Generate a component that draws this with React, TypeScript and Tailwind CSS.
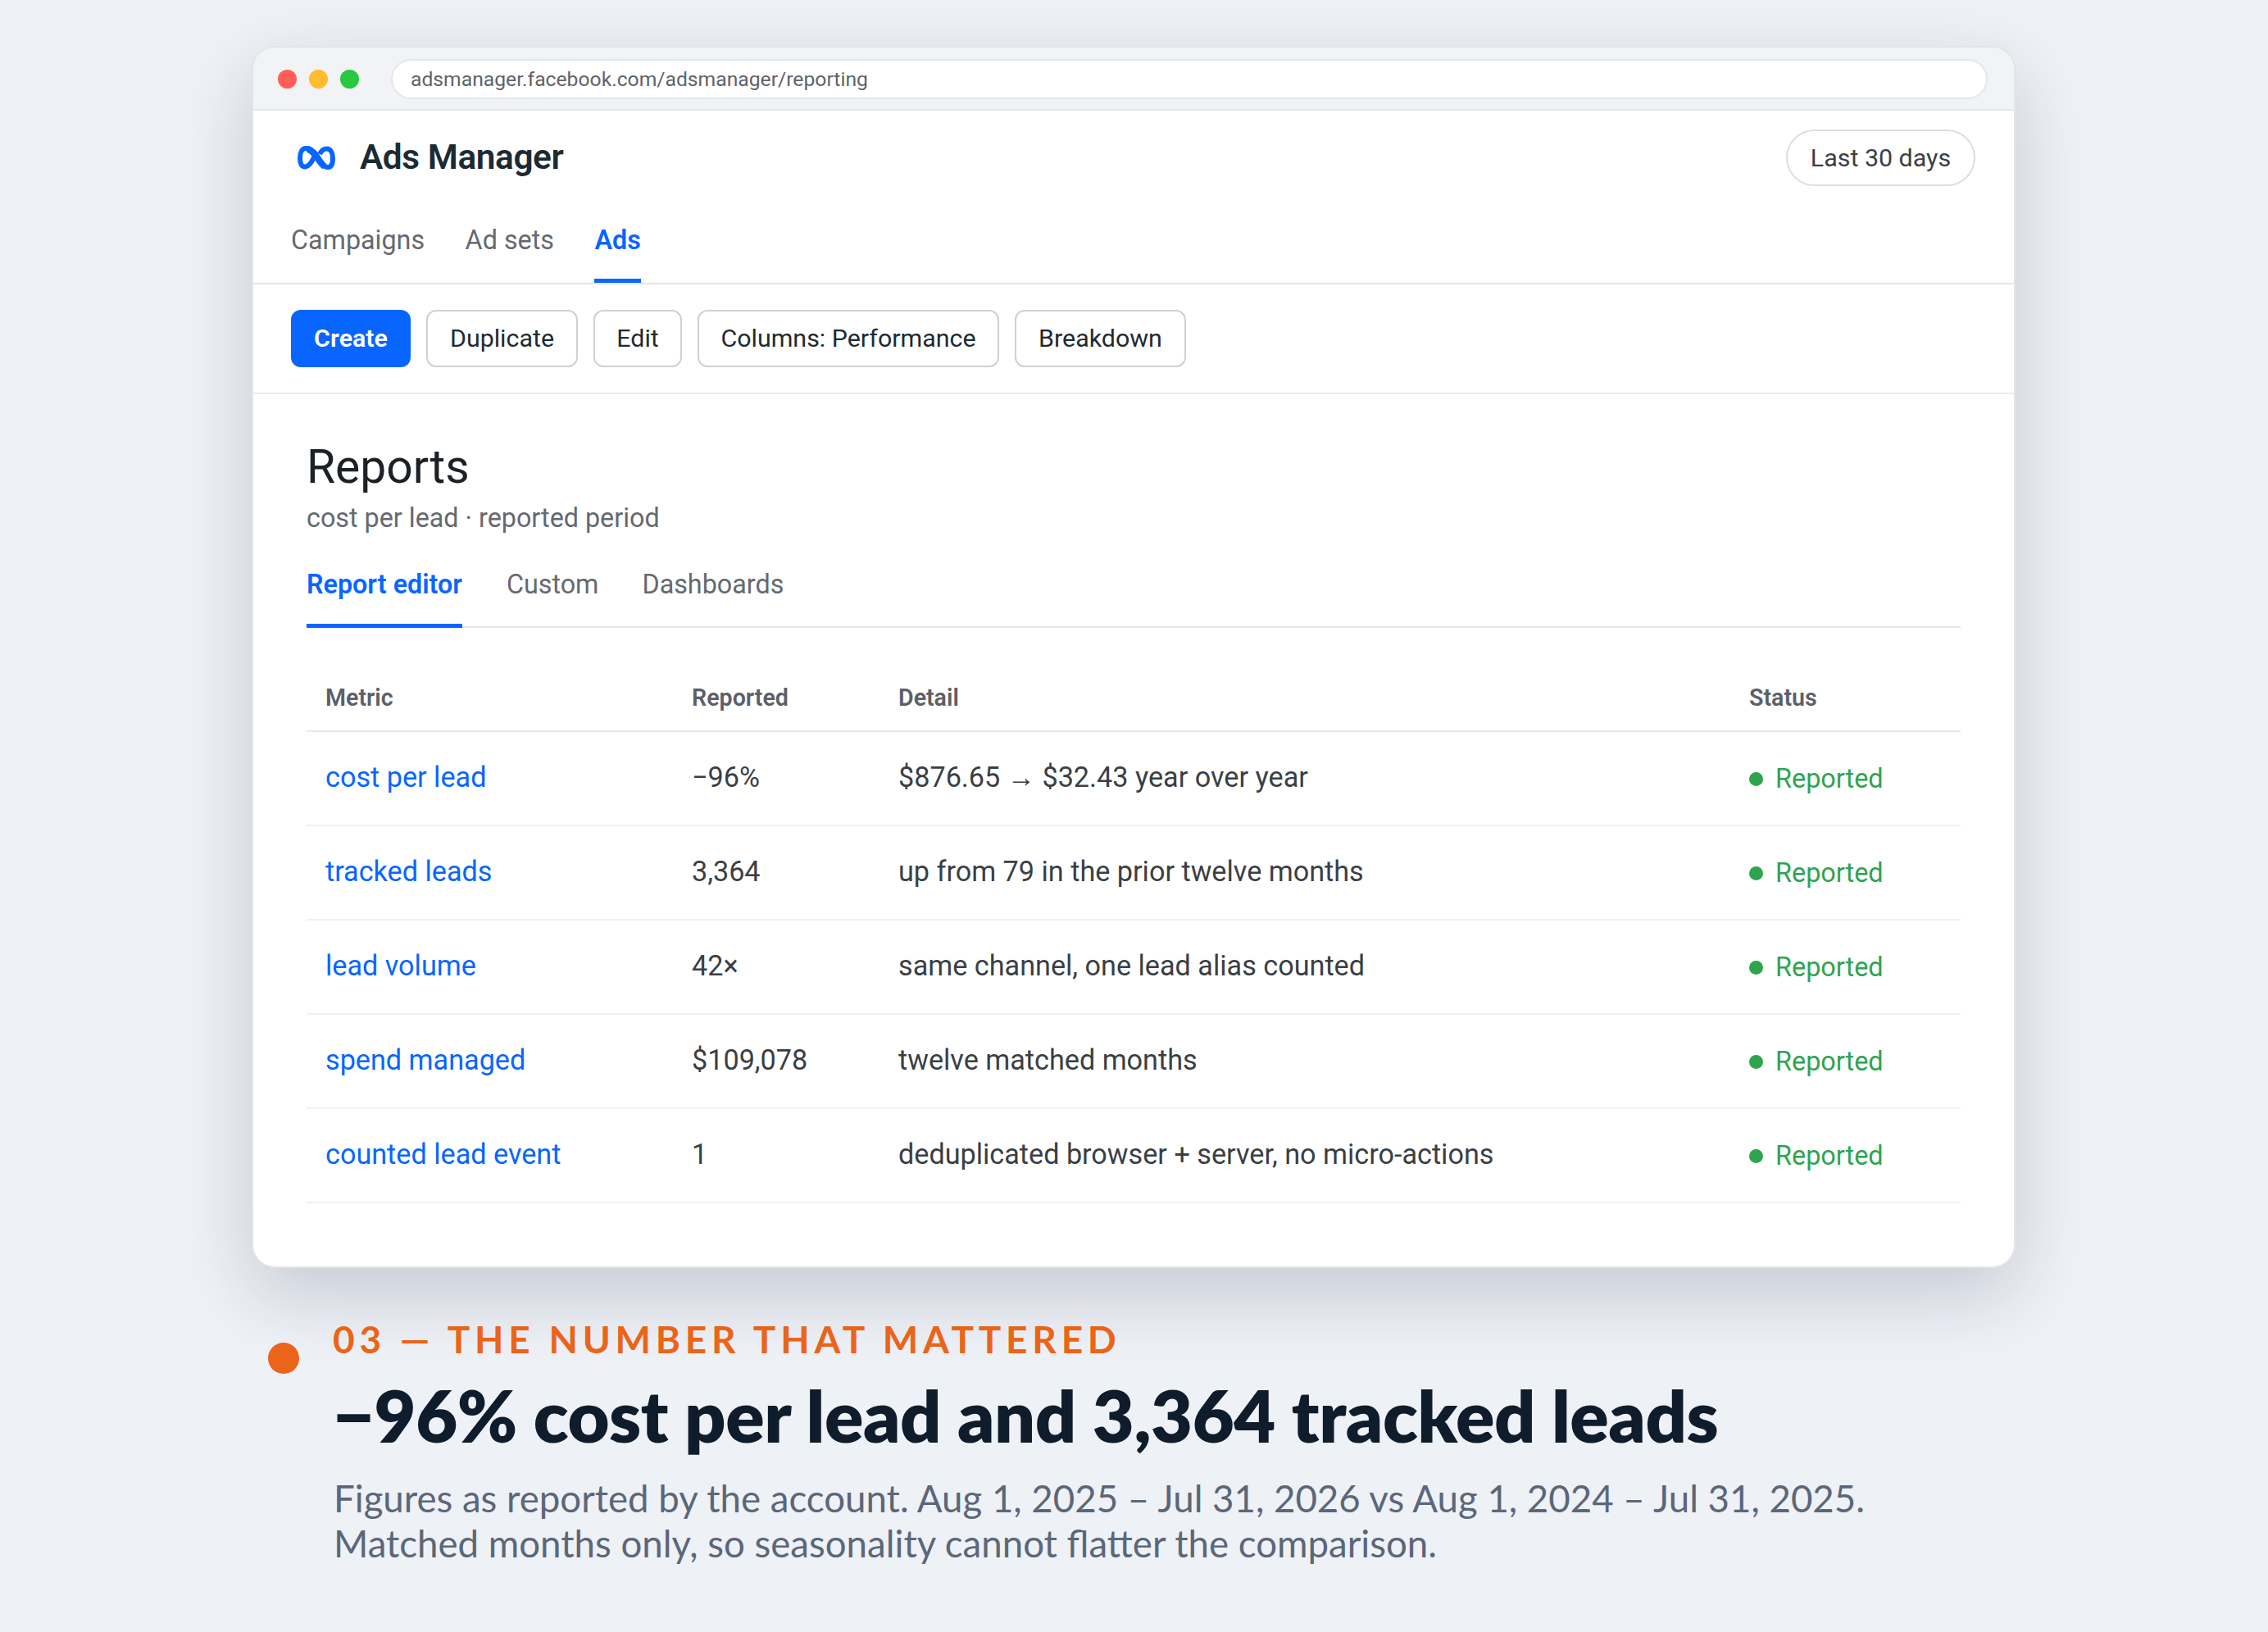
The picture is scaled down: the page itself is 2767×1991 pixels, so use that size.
const rows = [
  { metric: "cost per lead", reported: "−96%", detail: "$876.65 → $32.43 year over year" },
  { metric: "tracked leads", reported: "3,364", detail: "up from 79 in the prior twelve months" },
  { metric: "lead volume", reported: "42×", detail: "same channel, one lead alias counted" },
  { metric: "spend managed", reported: "$109,078", detail: "twelve matched months" },
  { metric: "counted lead event", reported: "1", detail: "deduplicated browser + server, no micro-actions" },
];

function MetaLogo() {
  return (
    <svg width="46" height="29" viewBox="0 0 46 29" fill="none" className="ml-[8px]">
      <path
        d="M21 12C17 21 13 25.5 8.5 25.5C5 25.5 3 21 3 15C3 8 5.5 3 10 3C16 3 21 10 26 17C30 23 33 26 37 26C41 26 43 22 43 15C43 8 40 3.5 35.5 3.5C31.5 3.5 29 6 27 10"
        stroke="#0866ff"
        strokeWidth="6"
      />
      <path d="M12 3.5C18 5 22 11 26 17C28 20 30 23 33 25" stroke="#0866ff" strokeWidth="8" />
    </svg>
  );
}

export default function App() {
  return (
    <div className="w-[2767px] h-[1991px] bg-[#eef1f6] pt-[58px] pl-[309px] font-['Roboto',sans-serif] overflow-hidden">
      <div className="w-[2148px] h-[1487px] rounded-[26px] bg-white overflow-hidden shadow-[0_32px_90px_rgba(30,41,70,0.2)] outline-2 outline-[#e2e5ea]">
        <div className="h-[77px] bg-[#f1f3f5] border-b-2 border-[#e4e6eb] flex items-center pt-[2px] pl-[30px] pr-[32px]">
          <div className="flex gap-[15px]">
            <span className="w-[23px] h-[23px] rounded-full bg-[#ff5f57]" />
            <span className="w-[23px] h-[23px] rounded-full bg-[#febc2e]" />
            <span className="w-[23px] h-[23px] rounded-full bg-[#28c840]" />
          </div>
          <div className="ml-[39px] flex-1 h-[49px] rounded-full bg-white border-2 border-[#e4e6eb] flex items-center pl-[22px] text-[24.7px] text-[#5f6368]">
            adsmanager.facebook.com/adsmanager/reporting
          </div>
        </div>
        <div className="h-[212px] border-b-2 border-[#e4e6eb] pl-[46px] pr-[47px]">
          <div className="flex justify-between pt-[23px]">
            <div className="flex items-center gap-[30px] h-[69px]">
              <MetaLogo />
              <span className="text-[42.4px] font-semibold text-[#1c2b33] -mt-[2px] -tracking-[0.01em]">Ads Manager</span>
            </div>
            <div className="h-[69px] w-[231px] rounded-full border-2 border-[#dcdee3] flex items-center justify-center text-[30.4px] text-[#3a3f45]">
              Last 30 days
            </div>
          </div>
          <div className="flex gap-[49.5px] mt-[29px] text-[32.3px] text-[#65696f]">
            <span className="h-[89px] pt-[13px]">Campaigns</span>
            <span className="h-[89px] pt-[13px]">Ad sets</span>
            <span className="h-[89px] pt-[13px] font-semibold text-[#0866ff] border-b-[5px] border-[#0866ff]">Ads</span>
          </div>
        </div>
        <div className="h-[134px] border-b-2 border-[#e9ebef] pl-[46px] pt-[31px] flex gap-[19px] text-[30.4px] text-[#1c2b33]">
          <div className="h-[70px] w-[146px] rounded-[12px] bg-[#0866ff] text-white font-semibold flex items-center justify-center">Create</div>
          <div className="h-[70px] w-[185px] rounded-[12px] border-2 border-[#cfd1d6] flex items-center justify-center">Duplicate</div>
          <div className="h-[70px] w-[108px] rounded-[12px] border-2 border-[#cfd1d6] flex items-center justify-center">Edit</div>
          <div className="h-[70px] w-[368px] rounded-[12px] border-2 border-[#cfd1d6] flex items-center justify-center">Columns: Performance</div>
          <div className="h-[70px] w-[209px] rounded-[12px] border-2 border-[#cfd1d6] flex items-center justify-center">Breakdown</div>
        </div>
        <div className="pl-[65px] pr-[65px] pt-[55px]">
          <h1 className="text-[57px] leading-[68px] text-[#1c2126]">Reports</h1>
          <p className="text-[32.3px] leading-[44px] mt-[6px] text-[#65696f]">cost per lead · reported period</p>
          <div className="flex gap-[53px] mt-[17px] text-[32.3px] text-[#65696f] border-b-2 border-[#e4e6eb] h-[95px]">
            <span className="pt-[18px] h-[95px] font-semibold text-[#0866ff] border-b-[5px] border-[#0866ff]">Report editor</span>
            <span className="pt-[18px] ml-[1px]">Custom</span>
            <span className="pt-[18px]">Dashboards</span>
          </div>
          <table className="w-full table-fixed border-collapse">
            <thead>
              <tr className="border-b-2 border-[#e8e9ed] h-[126px] text-left text-[28.6px] text-[#5b6068]">
                <th className="w-[470px] pl-[23px] pt-[45px] font-semibold">Metric</th>
                <th className="w-[252px] pt-[45px] font-semibold">Reported</th>
                <th className="pt-[45px] font-semibold">Detail</th>
                <th className="w-[258px] pt-[45px] font-semibold">Status</th>
              </tr>
            </thead>
            <tbody>
              {rows.map((row) => (
                <tr key={row.metric} className="border-b-2 border-[#f0f1f4] h-[115px] text-[34.2px] text-[#3a3f45]">
                  <td className="pl-[23px] pb-[2px] text-[#0866ff]">{row.metric}</td>
                  <td className="pb-[2px]">{row.reported}</td>
                  <td className="pb-[2px]">{row.detail}</td>
                  <td>
                    <div className="flex items-center gap-[15px] mt-[2px] text-[32.4px] text-[#2fa44f]">
                      <span className="w-[17px] h-[17px] rounded-full bg-[#2fa44f]" />
                      Reported
                    </div>
                  </td>
                </tr>
              ))}
            </tbody>
          </table>
        </div>
      </div>
      <div className="flex mt-[60px] font-['Lato',sans-serif]">
        <span className="w-[38px] h-[38px] rounded-full bg-[#ea6419] mt-[33px] ml-[18px] shrink-0" />
        <div className="ml-[41px]">
          <div className="text-[46px] leading-[58px] font-bold tracking-[0.125em] text-[#ea6419]">03 — THE NUMBER THAT MATTERED</div>
          <div className="text-[88px] leading-[106px] mt-[10px] font-extrabold text-[#0e1c2b] -tracking-[0.005em]">−96% cost per lead and 3,364 tracked leads</div>
          <p className="text-[45.6px] leading-[55px] mt-[21px] pl-[1px] text-[#5b6779]">
            Figures as reported by the account. Aug 1, 2025 – Jul 31, 2026 vs Aug 1, 2024 – Jul 31, 2025.
            <br />
            Matched months only, so seasonality cannot flatter the comparison.
          </p>
        </div>
      </div>
    </div>
  );
}
